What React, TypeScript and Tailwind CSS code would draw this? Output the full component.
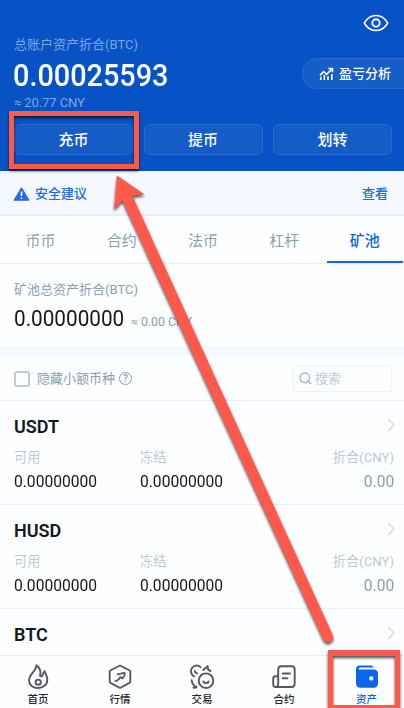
import React from "react";

const actions = ["充币", "提币", "划转"];
const tabs = ["币币", "合约", "法币", "杠杆", "矿池"];
const coins = [
  { name: "USDT", available: "0.00000000", frozen: "0.00000000", value: "0.00" },
  { name: "HUSD", available: "0.00000000", frozen: "0.00000000", value: "0.00" },
  { name: "BTC" },
];

function EyeIcon() {
  return (
    <svg width="26" height="18" viewBox="0 0 26 18" fill="none" stroke="#fff" strokeWidth="1.6">
      <path d="M1.3 9C4.2 4 8.400 1.500 13 1.500S21.800 4 24.700 9C21.800 14 17.600 16.500 13 16.500S4.200 14 1.300 9Z" strokeLinejoin="round" />
      <circle cx="13" cy="9" r="3.7" strokeWidth="1.9" />
    </svg>
  );
}

function ProfitIcon() {
  return (
    <svg width="15" height="14" viewBox="0 0 16 14" fill="none" stroke="#fff" strokeWidth="1.7">
      <path d="M1 8.500 5 4.500 8 7.300 14 1.500M10 1.200H14.400V5.200" />
      <path d="M1.900 10V13.500M5.700 8V13.500M9.600 9.500V13.500M13.700 7V13.500" />
    </svg>
  );
}

function WarningIcon() {
  return (
    <svg width="17" height="14" viewBox="0 0 17 14">
      <path d="M8.500.700 16 13.200H1Z" fill="#2468e8" stroke="#2468e8" strokeWidth="1" strokeLinejoin="round" />
      <path d="M8.500 4.500V9" stroke="#fff" strokeWidth="1.600" />
      <circle cx="8.500" cy="11.100" r=".9" fill="#fff" />
    </svg>
  );
}

function Chevron() {
  return (
    <svg width="9" height="14" viewBox="0 0 9 14" fill="none" stroke="#d9dfe6" strokeWidth="1.7">
      <path d="M1.200 1.200 7 7 1.200 12.800" />
    </svg>
  );
}

function FlameIcon() {
  return (
    <svg width="24" height="26" viewBox="0 0 24 26" fill="none" stroke="#55585e" strokeWidth="1.900" strokeLinejoin="round" strokeLinecap="round">
      <path d="M10.300 1.200C10.600 7 3.200 9.500 3 16.200 3 21 7 24 12 24S21.300 20.900 21.300 15.700C21.300 11.800 19.400 9.700 18.700 7.200 17.400 8.500 16.800 10 16.200 12 15.400 12.800 14.100 12.300 14 11.200 15.200 7.500 13.600 3.200 10.300 1.200Z" />
      <circle cx="12.200" cy="18.200" r="2.600" />
    </svg>
  );
}

function MarketIcon() {
  return (
    <svg width="24" height="26" viewBox="0 0 24 26" fill="none" stroke="#55585e" strokeWidth="1.900" strokeLinejoin="round">
      <path d="M12 1.500 21.700 6.500Q22.300 7 22.300 8V17.200Q22.300 18.300 21.500 18.800L12 24 2.500 18.800Q1.700 18.300 1.700 17.200V8Q1.700 7 2.300 6.500Z" />
      <path d="M6.700 17.200C9.500 17 11 15.500 12.100 13.100L14.600 14.400C16.300 12.700 16.900 10.800 16.900 8.700M8.900 10.300C12 9.800 14.100 9.300 17 8.700" strokeWidth="1.800" />
    </svg>
  );
}

function TradeIcon() {
  return (
    <svg width="26" height="26" viewBox="0 0 26 26" fill="none" stroke="#55585e" strokeWidth="1.900" strokeLinecap="round">
      <path d="M11.500 3.200A5.600 5.600 0 1 0 5.300 12.300" />
      <path d="M5.800 7.200C6 8.600 6.800 9.300 8 9.500" />
      <circle cx="17" cy="16.700" r="7.300" />
      <path d="M14.300 17.500C15.300 19.700 18.700 19.700 19.700 17.500" />
      <path d="M14.200 6C15.300 4.300 17 3.400 19 2.900M18.500 2C18.200 4.500 19.500 6.200 21.500 7" />
      <path d="M2.700 16.300C2.900 20 4.500 22 8 23.200L4.500 23.800" />
    </svg>
  );
}

function ContractIcon() {
  return (
    <svg width="24" height="26" viewBox="0 0 24 26" fill="none" stroke="#55585e" strokeWidth="1.900" strokeLinejoin="round" strokeLinecap="round">
      <path d="M6.200 20.500V5.500Q6.200 2.200 9.500 2.200H19.500Q22.700 2.200 22.700 5.500V19.500Q22.700 23 19.500 23H4Q1.200 23 1.200 20.200V14.500Q1.200 12.300 3.500 12.300H6.200V20.300Q6.200 23 4 23" />
      <path d="M10.700 9.500H18M10.700 14.300H15.500" />
    </svg>
  );
}

function WalletIcon() {
  return (
    <svg width="24" height="26" viewBox="0 0 24 26">
      <path d="M1 5.500Q1 1.500 5 1.500H16Q18 1.500 18.800 3.500H5.500Q3.700 3.700 3.700 5.500H18.500Q23 5.500 23 10V19Q23 23.700 18.500 23.700H5.500Q1 23.700 1 19Z" fill="#0b65ed" />
      <circle cx="16.300" cy="14.400" r="2.200" fill="#fff" />
    </svg>
  );
}

const navItems = [
  { label: "首页", icon: <FlameIcon /> },
  { label: "行情", icon: <MarketIcon /> },
  { label: "交易", icon: <TradeIcon /> },
  { label: "合约", icon: <ContractIcon /> },
  { label: "资产", icon: <WalletIcon />, active: true },
];

type Coin = { name: string; available?: string; frozen?: string; value?: string };

function CoinRow({ name, available, frozen, value }: Coin) {
  return (
    <section className="flex h-[104px] shrink-0 flex-col border-b border-[#e9f0fb] pt-[14px] pr-[10px] pl-[14px] last:h-[47px] last:border-b-0">
      <div className="flex h-6 items-center justify-between">
        <h2 className="origin-left text-[18px] leading-6 font-semibold text-[#14171c]">{name}</h2>
        <div className="-mt-1 -mr-1.5 flex w-[13px] justify-start"><Chevron /></div>
      </div>
      {available && (
        <>
          <div className="mt-[9px] grid grid-cols-[126px_1fr_auto] text-[13.200px] leading-5 text-[#bfc9d2]">
            <span>可用</span>
            <span>冻结</span>
            <span>折合(CNY)</span>
          </div>
          <div className="mt-1 grid grid-cols-[126px_1fr_auto] text-[16.500px] leading-5 text-[#14171c]">
            <span className="origin-left scale-x-[0.945]">{available}</span>
            <span className="origin-left scale-x-[0.945]">{frozen}</span>
            <span className="origin-right scale-x-[0.945] text-[#8b9eae]">{value}</span>
          </div>
        </>
      )}
    </section>
  );
}

function Annotations() {
  return (
    <svg className="pointer-events-none absolute inset-0 drop-shadow-[0_2px_1.5px_rgba(0,0,0,0.7)]" width="404" height="708" viewBox="0 0 404 708">
      <rect x="11.500" y="113.500" width="125" height="53" fill="none" stroke="#ff594b" strokeWidth="5" />
      <path d="M328 650H400V708H328ZM333 656V705H395V656Z" fill="#ff594b" fillRule="evenodd" />
      <path d="M117 175.500 144.500 194.300 132.500 196 332.600 634.800A5.200 5.200 0 0 1 323.300 639.600L122.500 200.500 114 209.500Z" fill="#ff594b" />
    </svg>
  );
}

export default function App() {
  return (
    <div className="relative flex h-[708px] w-[404px] flex-col overflow-hidden bg-[#fdfeff] font-[Roboto,'Noto_Sans_CJK_SC',sans-serif] whitespace-nowrap">
      <header className="flex h-[171px] shrink-0 flex-col bg-[#0752c5]">
        <div className="flex h-[35px] items-start justify-end pt-[14px] pr-[15px]"><EyeIcon /></div>
        <div className="flex justify-between pl-[14px]">
          <div className="flex flex-col items-start text-[#7fa5e4]">
            <span className="text-[13px] leading-5">总账户资产折合(BTC)</span>
            <span className="mt-[5px] -ml-px origin-left scale-x-[0.93] text-[31px] leading-8 font-medium text-white">0.00025593</span>
            <span className="mt-[3px] text-[13px] leading-4 tracking-[-0.1px]">≈ 20.77 CNY</span>
          </div>
          <button className="mt-[23px] flex h-[31px] w-[102px] items-center gap-[5px] rounded-l-full border border-r-0 border-[#2b68cd] bg-[#165dc8] pt-px pl-4 text-[13px] font-medium text-white">
            <ProfitIcon />
            盈亏分析
          </button>
        </div>
        <div className="mt-[13px] grid grid-cols-3 gap-[10.5px] pr-3 pl-[14px]">
          {actions.map((label) => (
            <button key={label} className="h-[31px] rounded-md border border-[#2d69ce] bg-[#155cc7] pt-[2px] text-[15px] leading-[27px] font-medium text-white">{label}</button>
          ))}
        </div>
      </header>

      <div className="flex h-[45px] shrink-0 items-center border-b-2 border-[#e4eefc] bg-[#f5f9ff] pt-[2px] pr-4 pl-[13px] text-[13px] font-medium text-[#2468e8]">
        <WarningIcon />
        <span className="ml-[5px]">安全建议</span>
        <span className="ml-auto">查看</span>
      </div>

      <nav className="grid h-12 shrink-0 grid-cols-[repeat(4,81.200px)_79.200px] border-b border-[#e5f0fb] text-center text-[15px] leading-[50px] text-[#8b9eae]">
        {tabs.map((tab) =>
          tab === "矿池" ? (
            <div key={tab} className="mr-px ml-[2px] h-[47px] border-b-[2.500px] border-[#0b65ed] font-medium text-[#0b65ed]">{tab}</div>
          ) : (
            <div key={tab}>{tab}</div>
          ),
        )}
      </nav>

      <section className="flex h-[82px] shrink-0 flex-col pt-4 pl-[14px]">
        <span className="text-[13px] leading-5 text-[#8b9eae]">矿池总资产折合(BTC)</span>
        <div className="mt-1 flex items-baseline">
          <span className="w-[117px] origin-left scale-x-[0.92] text-[22.500px] leading-7 text-[#14171c]">0.00000000</span>
          <span className="text-[12.500px] tracking-[-0.1px] text-[#8b9eae]">≈ 0.00 CNY</span>
        </div>
      </section>
      <div className="h-[11px] shrink-0 bg-[#f5f9fd]" />

      <div className="flex h-[44px] shrink-0 items-center border-b border-[#e9eff8] pr-3 pl-[14px]">
        <span className="size-4 rounded-[3px] border-2 border-[#bfcbd5]" />
        <span className="ml-[7px] text-[13px] text-[#8b9eae]">隐藏小额币种</span>
        <span className="ml-1 flex size-[13px] items-center justify-center rounded-full border border-[#8b9eae] text-[10px] font-medium text-[#8b9eae]">?</span>
        <div className="ml-auto flex h-[27px] w-[99px] items-center gap-[3px] rounded-[3px] border border-[#edf2f9] pl-[5px] text-[13px] text-[#bfc9d2]">
          <svg width="13" height="13" viewBox="0 0 13 13" fill="none" stroke="#aab6c1" strokeWidth="1.300">
            <circle cx="5.800" cy="5.800" r="4.800" />
            <path d="M9.200 9.200 12.300 12.300" />
          </svg>
          搜索
        </div>
      </div>

      <main className="flex h-[254px] shrink-0 flex-col">
        {coins.map((coin) => <CoinRow key={coin.name} {...coin} />)}
      </main>

      <footer className="grid h-[53px] shrink-0 grid-cols-[79px_82px_82px_82px_79px] border-t border-[#e8edf6] bg-[#fdfeff]">
        {navItems.map((item) => (
          <div key={item.label} className="flex flex-col items-center pt-[8px] first:pr-[3px] last:pl-[4px]">
            {item.icon}
            <span className={item.active ? "mt-[3px] text-[10.500px] leading-[14px] font-medium text-[#0b65ed]" : "mt-[3px] text-[10.500px] leading-[14px] font-medium text-[#22252a]"}>{item.label}</span>
          </div>
        ))}
      </footer>

      <Annotations />
    </div>
  );
}
